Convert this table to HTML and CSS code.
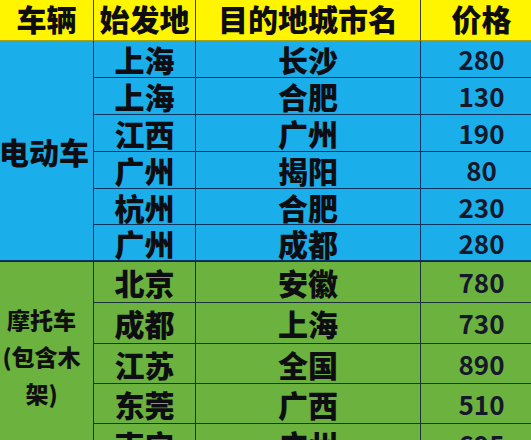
FILE: index.html
```html
<!DOCTYPE html>
<html lang="zh-CN">
<head>
<meta charset="utf-8">
<title>价格表</title>
<link rel="stylesheet" href="styles.css">
</head>
<body>
<div class="sheet">
  <div class="c head">车辆</div>
  <div class="c head">始发地</div>
  <div class="c head">目的地城市名</div>
  <div class="c head">价格</div>

  <div class="c blue label ev">电动车</div>
  <div class="c blue">上海</div><div class="c blue">长沙</div><div class="c blue num">280</div>
  <div class="c blue">上海</div><div class="c blue">合肥</div><div class="c blue num">130</div>
  <div class="c blue">江西</div><div class="c blue">广州</div><div class="c blue num">190</div>
  <div class="c blue">广州</div><div class="c blue">揭阳</div><div class="c blue num">80</div>
  <div class="c blue">杭州</div><div class="c blue">合肥</div><div class="c blue num">230</div>
  <div class="c blue">广州</div><div class="c blue">成都</div><div class="c blue num">280</div>

  <div class="c green top label moto">摩托车<br>(包含木<br>架)</div>
  <div class="c green top">北京</div><div class="c green top">安徽</div><div class="c green top num">780</div>
  <div class="c green">成都</div><div class="c green">上海</div><div class="c green num">730</div>
  <div class="c green">江苏</div><div class="c green">全国</div><div class="c green num">890</div>
  <div class="c green">东莞</div><div class="c green">广西</div><div class="c green num">510</div>
  <div class="c green">南宁</div><div class="c green">广州</div><div class="c green num">695</div>
</div>
</body>
</html>
```
FILE: styles.css
```css
html, body {
  margin: 0;
  padding: 0;
  background: #ffffff;
  overflow: hidden;
}

.sheet {
  display: grid;
  grid-template-columns: 94px 102px 225px 122px;
  grid-template-rows: 41px 37px 37px 37px 37px 36px 36px 42px 41px 40px 40px 41px;
  width: 543px;
  font-family: "Noto Sans CJK SC", "Noto Sans", sans-serif;
  font-weight: 900;
  color: #0d0d12;
}

.c {
  box-sizing: border-box;
  display: flex;
  align-items: center;
  justify-content: center;
  border-right: 1px solid rgba(8, 20, 60, 0.8);
  border-bottom: 1px solid rgba(8, 20, 60, 0.8);
  font-size: 30px;
  line-height: 1;
  white-space: nowrap;
}

.head {
  background: #fff500;
  padding-bottom: 5px;
  border-bottom-color: rgba(60, 60, 20, 0.45);
}

.blue { background: #1aaeea; }
.green { background: #6cb23e; }
.top { border-top: 1px solid rgba(8, 20, 40, 0.85); }

.num {
  font-size: 26px;
  font-weight: 700;
  color: #14182a;
}

.label { grid-column: 1; }
.ev { grid-row: 2 / span 6; justify-content: flex-end; padding-right: 4px; }
.moto {
  grid-row: 8 / span 5;
  font-size: 23px;
  line-height: 37px;
  white-space: normal;
  text-align: center;
  padding-right: 10px;
  padding-bottom: 14px;
  color: #101010;
}
```
